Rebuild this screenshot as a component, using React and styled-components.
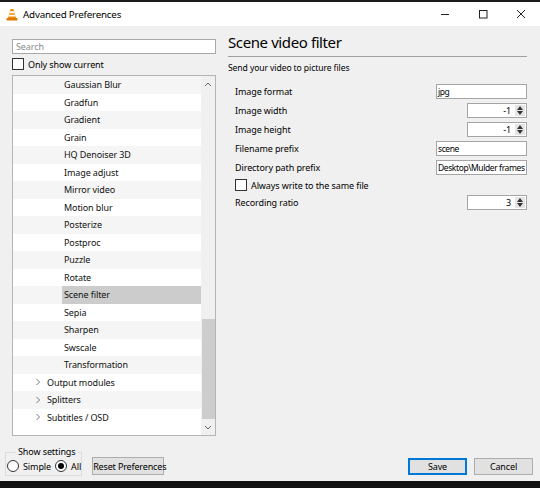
import React from "react";
import styled, { createGlobalStyle, css } from "styled-components";

const GlobalStyle = createGlobalStyle`
  html, body { margin: 0; padding: 0; background: #111; }
  body {
    font-family: "Noto Sans", "Open Sans", sans-serif;
    font-size: 9px;
    letter-spacing: -0.1px;
    color: #000;
  }
  * { box-sizing: border-box; }
`;

const Window = styled.div`
  width: 540px;
  height: 488px;
  display: flex;
  flex-direction: column;
  background: #f0f0f0;
  border-top: 2px solid #1c1c1c;
  border-bottom: 7px solid #111;
`;

const TitleBar = styled.div`
  height: 24px;
  flex-shrink: 0;
  display: flex;
  align-items: center;
  background: #fff;
  padding-left: 6px;
`;

const TitleText = styled.span`
  margin-left: 5px;
  font-size: 9.8px;
  letter-spacing: -0.2px;
  color: #000;
  flex: 1;
`;

const WinButton = styled.div`
  width: 38px;
  height: 24px;
  display: flex;
  align-items: center;
  justify-content: center;
`;

const Main = styled.div`
  height: 414px;
  display: flex;
`;

const LeftPane = styled.div`
  width: 216px;
  padding: 13px 0 0 12px;
  display: flex;
  flex-direction: column;
`;

const SearchBox = styled.div`
  height: 15px;
  border: 1px solid #a8a8a8;
  background: #fff;
  color: #8a8a8a;
  line-height: 13px;
  padding-left: 3px;
`;

const CheckRow = styled.label`
  display: flex;
  align-items: center;
  gap: 4px;
  height: 12px;
  margin: ${(p) => p.$margin || "4px 0 0 0"};
`;

const CheckBox = styled.span`
  width: 12px;
  height: 12px;
  border: 1px solid #333;
  background: #fff;
  flex-shrink: 0;
`;

const TreeList = styled.div`
  margin-top: 5px;
  height: 361px;
  border: 1px solid #b4b4b4;
  background: #fff;
  display: flex;
  overflow: hidden;
`;

const Rows = styled.div`
  flex: 1;
  display: flex;
  flex-direction: column;
`;

const Row = styled.div`
  height: 17.5px;
  flex-shrink: 0;
  display: flex;
  align-items: stretch;
  background: ${(p) => (p.$alt ? "#f5f5f5" : "#fff")};
  padding-left: ${(p) => p.$indent}px;
`;

const Expander = styled.span`
  width: 10px;
  display: flex;
  align-items: center;
  justify-content: flex-start;
`;

const RowLabel = styled.span`
  flex: 1;
  display: flex;
  align-items: center;
  padding-left: 2px;
  color: #111;
  ${(p) =>
    p.$selected &&
    css`
      background: #cccccc;
    `}
`;

const ScrollBar = styled.div`
  width: 14px;
  background: #f0f0f0;
  display: flex;
  flex-direction: column;
`;

const ScrollArrow = styled.div`
  height: 16px;
  display: flex;
  align-items: center;
  justify-content: center;
`;

const ScrollTrack = styled.div`
  flex: 1;
  display: flex;
  flex-direction: column;
  justify-content: flex-end;
  align-items: center;
`;

const ScrollThumb = styled.div`
  width: 13px;
  height: 100px;
  background: #cdcdcd;
`;

const RightPane = styled.div`
  margin-left: 12px;
  width: 299px;
  padding-top: 6px;
  display: flex;
  flex-direction: column;
`;

const PanelTitle = styled.div`
  font-size: 15px;
  letter-spacing: -0.4px;
  line-height: 20px;
  padding-bottom: 4px;
  border-bottom: 1px solid #a0a0a0;
  color: #000;
`;

const PanelSub = styled.div`
  margin-top: 5px;
  font-size: 8.6px;
  line-height: 12px;
`;

const Form = styled.div`
  margin-top: 10px;
  padding-left: 7px;
  display: flex;
  flex-direction: column;
  gap: 4px;
`;

const FormRow = styled.div`
  height: 15px;
  display: flex;
  align-items: center;
  justify-content: space-between;
`;

const TextField = styled.div`
  width: 91px;
  height: 15px;
  border: 1px solid #a5a5a5;
  background: #fff;
  font-size: 8.5px;
  letter-spacing: -0.4px;
  line-height: 13px;
  padding-left: 1px;
  white-space: nowrap;
  overflow: hidden;
`;

const SpinField = styled.div`
  width: 60px;
  height: 15px;
  border: 1px solid #a5a5a5;
  background: #fff;
  display: flex;
`;

const SpinValue = styled.span`
  flex: 1;
  text-align: right;
  line-height: 13px;
  padding-right: 3px;
`;

const SpinButtons = styled.span`
  width: 10px;
  margin: 1px;
  background: #e5e5e5;
  display: flex;
  flex-direction: column;
  align-items: center;
  justify-content: space-evenly;
`;

const Footer = styled.div`
  flex: 1;
  display: flex;
  align-items: flex-end;
  justify-content: space-between;
  padding: 0 7px 5px 5px;
`;

const FooterGroup = styled.div`
  display: flex;
  align-items: flex-end;
  gap: ${(p) => p.$gap || 0}px;
`;

const GroupBox = styled.fieldset`
  margin: 0;
  width: 77px;
  height: 29px;
  border: 1px solid #dcdcdc;
  padding: 0 0 0 1px;
  display: flex;
  align-items: center;
  gap: 4px;
`;

const Legend = styled.legend`
  padding: 0 2px;
  margin-left: 9px;
  line-height: 10px;
`;

const RadioItem = styled.label`
  display: flex;
  align-items: center;
  gap: 4px;
`;

const Radio = styled.span`
  width: 12px;
  height: 12px;
  border-radius: 50%;
  border: 1px solid #333;
  background: #fff;
  display: flex;
  align-items: center;
  justify-content: center;
  &::after {
    content: "";
    width: 6px;
    height: 6px;
    border-radius: 50%;
    background: ${(p) => (p.$checked ? "#000" : "transparent")};
  }
`;

const Button = styled.button`
  height: ${(p) => p.$h || 17}px;
  width: ${(p) => p.$w}px;
  margin-bottom: 1px;
  font-family: inherit;
  font-size: 9px;
  letter-spacing: -0.15px;
  white-space: nowrap;
  color: #000;
  background: #e1e1e1;
  border: 1px solid ${(p) => (p.$default ? "#0078d7" : "#adadad")};
  box-shadow: ${(p) => (p.$default ? "inset 0 0 0 1px #0078d7" : "none")};
  padding: 0;
`;

const VlcIcon = () => (
  <svg width="12" height="13" viewBox="0 0 12 13">
    <path d="M4.6 1 L7.4 1 L10 10 L2 10 Z" fill="#f08a00" />
    <path d="M4 3.2 L8 3.2 L8.6 5.2 L3.4 5.2 Z" fill="#fff" />
    <path d="M3 6.8 L9 6.8 L9.5 8.5 L2.5 8.5 Z" fill="#fff" />
    <rect x="0.5" y="10" width="11" height="2.5" rx="0.8" fill="#e07800" />
  </svg>
);

const Chevron = ({ dir = "right", color = "#777" }) => {
  const d = {
    right: "M1.5 1 L4.5 4 L1.5 7",
    up: "M1 5 L4 2 L7 5",
    down: "M1 2 L4 5 L7 2",
  }[dir];
  const w = dir === "right" ? 6 : 8;
  const h = dir === "right" ? 8 : 7;
  return (
    <svg width={w} height={h} viewBox={`0 0 ${w} ${h}`}>
      <path d={d} fill="none" stroke={color} strokeWidth="1" />
    </svg>
  );
};

const Tri = ({ up }) => (
  <svg width="6" height="4" viewBox="0 0 6 4">
    <path d={up ? "M0 4 L3 0 L6 4 Z" : "M0 0 L3 4 L6 0 Z"} fill="#333" />
  </svg>
);

const treeItems = [
  { label: "Gaussian Blur" },
  { label: "Gradfun" },
  { label: "Gradient" },
  { label: "Grain" },
  { label: "HQ Denoiser 3D" },
  { label: "Image adjust" },
  { label: "Mirror video" },
  { label: "Motion blur" },
  { label: "Posterize" },
  { label: "Postproc" },
  { label: "Puzzle" },
  { label: "Rotate" },
  { label: "Scene filter", selected: true },
  { label: "Sepia" },
  { label: "Sharpen" },
  { label: "Swscale" },
  { label: "Transformation" },
  { label: "Output modules", parent: true },
  { label: "Splitters", parent: true },
  { label: "Subtitles / OSD", parent: true },
];

const fields = [
  { label: "Image format", type: "text", value: "jpg" },
  { label: "Image width", type: "spin", value: "-1" },
  { label: "Image height", type: "spin", value: "-1" },
  { label: "Filename prefix", type: "text", value: "scene" },
  { label: "Directory path prefix", type: "text", value: "Desktop\\Mulder frames" },
  { label: "Always write to the same file", type: "check" },
  { label: "Recording ratio", type: "spin", value: "3" },
];

function App() {
  return (
    <>
      <GlobalStyle />
      <Window>
        <TitleBar>
          <VlcIcon />
          <TitleText>Advanced Preferences</TitleText>
          <WinButton>
            <svg width="10" height="10" viewBox="0 0 10 10">
              <path d="M1 5.5 H9" stroke="#222" strokeWidth="1" />
            </svg>
          </WinButton>
          <WinButton>
            <svg width="10" height="10" viewBox="0 0 10 10">
              <rect x="1.5" y="1.5" width="7.5" height="7.5" fill="none" stroke="#222" strokeWidth="1" />
            </svg>
          </WinButton>
          <WinButton>
            <svg width="10" height="10" viewBox="0 0 10 10">
              <path d="M1 1 L9 9 M9 1 L1 9" stroke="#222" strokeWidth="1" />
            </svg>
          </WinButton>
        </TitleBar>

        <Main>
          <LeftPane>
            <SearchBox>Search</SearchBox>
            <CheckRow>
              <CheckBox />
              Only show current
            </CheckRow>
            <TreeList>
              <Rows>
                {treeItems.map((it, i) =>
                  it.parent ? (
                    <Row key={it.label} $alt={i % 2 === 0} $indent={22}>
                      <Expander>
                        <Chevron dir="right" />
                      </Expander>
                      <RowLabel>{it.label}</RowLabel>
                    </Row>
                  ) : (
                    <Row key={it.label} $alt={i % 2 === 0} $indent={49}>
                      <RowLabel $selected={it.selected}>{it.label}</RowLabel>
                    </Row>
                  )
                )}
              </Rows>
              <ScrollBar>
                <ScrollArrow>
                  <Chevron dir="up" color="#606060" />
                </ScrollArrow>
                <ScrollTrack>
                  <ScrollThumb />
                </ScrollTrack>
                <ScrollArrow>
                  <Chevron dir="down" color="#606060" />
                </ScrollArrow>
              </ScrollBar>
            </TreeList>
          </LeftPane>

          <RightPane>
            <PanelTitle>Scene video filter</PanelTitle>
            <PanelSub>Send your video to picture files</PanelSub>
            <Form>
              {fields.map((f) =>
                f.type === "check" ? (
                  <CheckRow key={f.label} $margin="0">
                    <CheckBox />
                    {f.label}
                  </CheckRow>
                ) : (
                  <FormRow key={f.label}>
                    <span>{f.label}</span>
                    {f.type === "text" ? (
                      <TextField>{f.value}</TextField>
                    ) : (
                      <SpinField>
                        <SpinValue>{f.value}</SpinValue>
                        <SpinButtons>
                          <Tri up />
                          <Tri />
                        </SpinButtons>
                      </SpinField>
                    )}
                  </FormRow>
                )
              )}
            </Form>
          </RightPane>
        </Main>

        <Footer>
          <FooterGroup $gap={10}>
            <GroupBox>
              <Legend>Show settings</Legend>
              <RadioItem>
                <Radio />
                Simple
              </RadioItem>
              <RadioItem>
                <Radio $checked />
                All
              </RadioItem>
            </GroupBox>
            <Button $w={72} $h={18}>Reset Preferences</Button>
          </FooterGroup>
          <FooterGroup $gap={7}>
            <Button $w={59} $default>Save</Button>
            <Button $w={59}>Cancel</Button>
          </FooterGroup>
        </Footer>
      </Window>
    </>
  );
}

export default App;
